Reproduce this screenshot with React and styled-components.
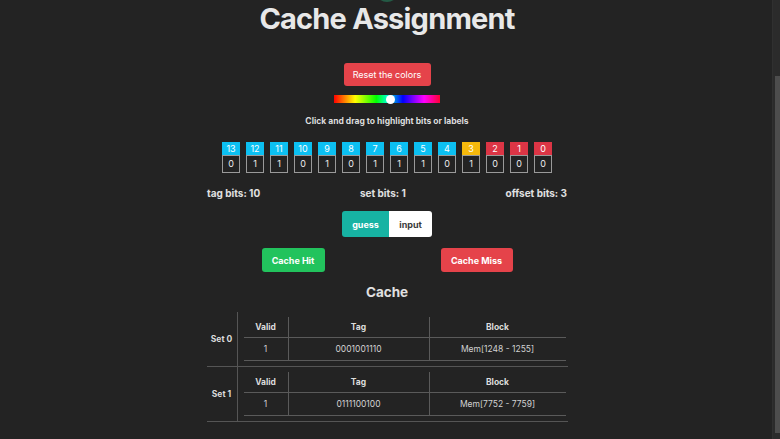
import React, { useLayoutEffect, useRef } from 'react'
import styled, { createGlobalStyle } from 'styled-components'

const Global = createGlobalStyle`
  html, body {
    margin: 0;
    height: 100%;
    overflow: hidden;
    background: #232323;
  }
  #root {
    height: 100%;
  }
`

const Frame = styled.div`
  display: flex;
  height: 100vh;
  background: #232323;
`

const Scroller = styled.div`
  flex: 1;
  overflow-y: scroll;
  scrollbar-width: none;
  color: #e4e4e4;
  font-family: Inter, 'DejaVu Sans', sans-serif;
  &::-webkit-scrollbar {
    display: none;
  }
`

// the page's scrollbar, as the browser drew it in the reference
const Rail = styled.div`
  width: 8px;
  display: flex;
  flex-direction: column;
  align-items: flex-end;
  background: #2b2b2b;
  border-left: 1px solid #303030;
  box-sizing: border-box;
`

const Thumb = styled.div`
  margin-top: 76px;
  width: 5px;
  height: 357px;
  background: #4d4d4d;
`

const Page = styled.main`
  display: flex;
  flex-direction: column;
  align-items: center;
  padding: 60px 0 17px 2px;
`

const Logo = styled.svg`
  display: block;
  width: 24px;
  height: 24px;
`

const Title = styled.h1`
  margin: 0;
  font-size: 29px;
  line-height: 34px;
  font-weight: 700;
  color: #e8e8e8;
  letter-spacing: -0.8px;
`

const Button = styled.button`
  border: none;
  border-radius: 3px;
  background: ${p => p.bg};
  color: #fff;
  font-family: inherit;
  font-size: 9px;
  font-weight: ${p => (p.bold ? 700 : 400)};
  height: ${p => p.h || 24}px;
  width: ${p => p.w}px;
  padding: 0;
  cursor: pointer;
`

const ResetButton = styled(Button)`
  margin-top: 27px;
`

const HueSlider = styled.input`
  -webkit-appearance: none;
  appearance: none;
  margin: 9px 0 0;
  width: 106px;
  height: 8px;
  background: linear-gradient(to right, #f00, #ff8000 10%, #ff0 20%, #0f0 40%, #0fc 50%, #00f 65%, #8000ff 75%, #f0f 85%, #f03 100%);
  outline: none;
  &::-webkit-slider-thumb {
    -webkit-appearance: none;
    width: 9px;
    height: 9px;
    border-radius: 50%;
    background: #fff;
    border: none;
  }
`

const Hint = styled.p`
  margin: 12px 0 0;
  font-size: 8.5px;
  line-height: 12px;
  font-weight: 700;
  color: #dcdcdc;
`

const Bits = styled.div`
  margin-top: 15px;
  display: flex;
  gap: 6px;
`

const Bit = styled.div`
  display: flex;
  flex-direction: column;
  width: 18px;
  font-size: 9px;
  text-align: center;
`

const BitLabel = styled.span`
  height: 13px;
  line-height: 13px;
  background: ${p => p.bg};
  color: #fff;
`

const BitValue = styled.span`
  height: 16px;
  line-height: 16px;
  border: 1px solid #9a9a9a;
  color: #eee;
`

const Counts = styled.div`
  margin-top: 13px;
  width: 360px;
  display: flex;
  justify-content: space-between;
  font-size: 10px;
  line-height: 14px;
  font-weight: 700;
  color: #e0e0e0;
`

const Toggle = styled.div`
  margin-top: 11px;
  display: flex;
  border-radius: 3px;
  overflow: hidden;
`

const ToggleOption = styled.button`
  border: none;
  padding: 0;
  height: 26px;
  width: ${p => p.w}px;
  font-family: inherit;
  font-size: 9px;
  font-weight: 700;
  background: ${p => (p.active ? '#17b3a3' : '#fff')};
  color: ${p => (p.active ? '#fff' : '#3a3a3a')};
`

const Answers = styled.div`
  margin-top: 11px;
  display: flex;
  gap: 116px;
`

const SectionTitle = styled.h2`
  margin: 11px 0 0;
  font-size: 13.5px;
  line-height: 18px;
  font-weight: 700;
  color: #e0e0e0;
`

const CacheTable = styled.table`
  margin-top: 11px;
  width: 361px;
  border-collapse: collapse;
  table-layout: fixed;
  font-size: 8.5px;
  color: #dcdcdc;
`

const SetRow = styled.tr`
  border-bottom: 1px solid #555;
`

const SetName = styled.th`
  width: 30px;
  padding: 0;
  border-right: 1px solid #555;
  font-weight: 700;
  text-align: center;
`

const SetBody = styled.td`
  padding: 5px 5px 5px 6px;
`

const Lines = styled.table`
  width: 320px;
  border-collapse: collapse;
  table-layout: fixed;
`

const Head = styled.th`
  width: ${p => p.w}px;
  height: 20px;
  padding: 0;
  font-weight: 700;
  border-bottom: 1px solid #5a5a5a;
  border-right: ${p => (p.last ? 'none' : '1px solid #5a5a5a')};
`

const Cell = styled.td`
  height: 22px;
  padding: 0;
  text-align: center;
  color: #d2d2d2;
  border-bottom: 1px solid #5a5a5a;
  border-right: ${p => (p.last ? 'none' : '1px solid #5a5a5a')};
`

const bits = [0, 1, 1, 0, 1, 0, 1, 1, 1, 0, 1, 0, 0, 0]
const labelColor = i => (i >= 4 ? '#0cc0f2' : i === 3 ? '#f6b90c' : '#dc3545')

const sets = [
  { name: 'Set 0', valid: 1, tag: '0001001110', block: 'Mem[1248 - 1255]' },
  { name: 'Set 1', valid: 1, tag: '0111100100', block: 'Mem[7752 - 7759]' },
]

const App = () => {
  const scroller = useRef(null)

  useLayoutEffect(() => {
    scroller.current.scrollTop = scroller.current.scrollHeight
  }, [])

  return (
    <>
      <Global />
      <Frame>
        <Scroller ref={scroller}>
          <Page>
            <Logo viewBox="0 0 24 24">
              <circle cx="12" cy="12" r="12" fill="#245a45" />
            </Logo>
            <Title>Cache Assignment</Title>
            <ResetButton bg="#e5434a" w={87} h={23}>
              Reset the colors
            </ResetButton>
            <HueSlider type="range" min="0" max="100" defaultValue="54" />
            <Hint>Click and drag to highlight bits or labels</Hint>
            <Bits>
              {bits.map((v, k) => {
                const i = 13 - k
                return (
                  <Bit key={i}>
                    <BitLabel bg={labelColor(i)}>{i}</BitLabel>
                    <BitValue>{v}</BitValue>
                  </Bit>
                )
              })}
            </Bits>
            <Counts>
              <span>tag bits: 10</span>
              <span>set bits: 1</span>
              <span>offset bits: 3</span>
            </Counts>
            <Toggle>
              <ToggleOption active w={47}>
                guess
              </ToggleOption>
              <ToggleOption w={43}>input</ToggleOption>
            </Toggle>
            <Answers>
              <Button bg="#22c35d" w={63} bold>
                Cache Hit
              </Button>
              <Button bg="#e5434a" w={72} bold>
                Cache Miss
              </Button>
            </Answers>
            <SectionTitle>Cache</SectionTitle>
            <CacheTable>
              <tbody>
                {sets.map(s => (
                  <SetRow key={s.name}>
                    <SetName>{s.name}</SetName>
                    <SetBody>
                      <Lines>
                        <thead>
                          <tr>
                            <Head w={44}>Valid</Head>
                            <Head w={140}>Tag</Head>
                            <Head w={136} last>
                              Block
                            </Head>
                          </tr>
                        </thead>
                        <tbody>
                          <tr>
                            <Cell>{s.valid}</Cell>
                            <Cell>{s.tag}</Cell>
                            <Cell last>{s.block}</Cell>
                          </tr>
                        </tbody>
                      </Lines>
                    </SetBody>
                  </SetRow>
                ))}
              </tbody>
            </CacheTable>
          </Page>
        </Scroller>
        <Rail>
          <Thumb />
        </Rail>
      </Frame>
    </>
  )
}

export default App
